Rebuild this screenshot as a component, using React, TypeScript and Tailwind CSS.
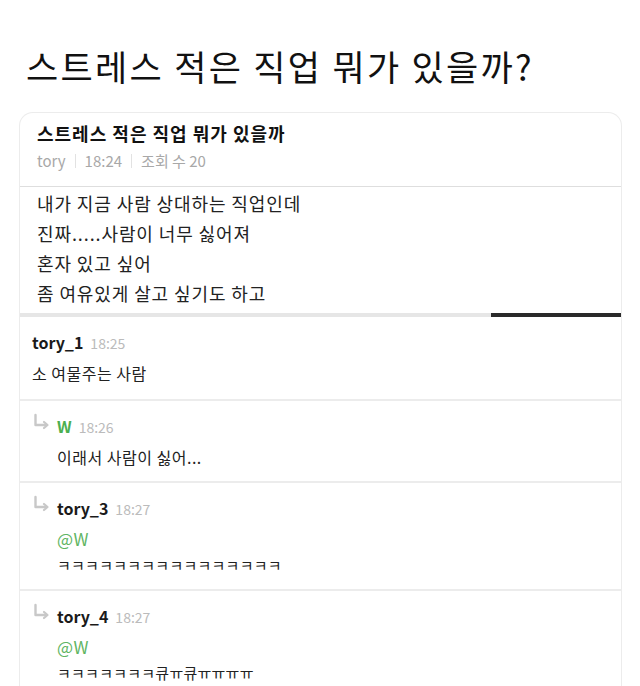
const font = { fontFamily: '"Noto Sans CJK KR", "Noto Sans", sans-serif' }

interface Comment {
  id: number
  name: string
  time: string
  reply: boolean
  mention?: string
  text: string
  nameGreen?: boolean
  laugh?: boolean
}

const comments: Comment[] = [
  { id: 1, name: 'tory_1', time: '18:25', reply: false, text: '소 여물주는 사람' },
  { id: 2, name: 'W', time: '18:26', reply: true, text: '이래서 사람이 싫어...', nameGreen: true },
  { id: 3, name: 'tory_3', time: '18:27', reply: true, mention: '@W', text: 'ㅋㅋㅋㅋㅋㅋㅋㅋㅋㅋㅋㅋㅋㅋㅋㅋ', laugh: true },
  { id: 4, name: 'tory_4', time: '18:27', reply: true, mention: '@W', text: 'ㅋㅋㅋㅋㅋㅋㅋ큐ㅠ큐ㅠㅠㅠㅠ', laugh: true },
]

export default function App() {
  return (
    <div className="h-[686px] w-[640px] overflow-hidden bg-white" style={font}>
      <h1 className="pl-[26px] pt-[41px] text-[35px] leading-[50px] tracking-[2.3px] font-normal text-[#111]">
        스트레스 적은 직업 뭐가 있을까?
      </h1>

      <div className="ml-[19px] mt-[21px] w-[603px] rounded-t-[14px] border border-b-0 border-[#ececec]">
        {/* Post header */}
        <div className="px-[17px] pt-[8px] pb-[15px] border-b border-[#dedede]">
          <p className="text-[18px] leading-[24px] tracking-[1px] font-bold text-[#111]">스트레스 적은 직업 뭐가 있을까</p>
          <div className="mt-[6px] flex items-center text-[15px] leading-[20px] text-[#a8a8a8]">
            <span>tory</span>
            <span className="mx-[9px] h-[14px] w-px bg-[#e2e2e2]" />
            <span>18:24</span>
            <span className="mx-[9px] h-[14px] w-px bg-[#e2e2e2]" />
            <span>조회 수 20</span>
          </div>
        </div>

        {/* Post body */}
        <div className="px-[17px] pt-px pb-[5px] text-[18px] leading-[30px] tracking-[0.9px] text-[#222]">
          <p>내가 지금 사람 상대하는 직업인데</p>
          <p>진짜.....사람이 너무 싫어져</p>
          <p>혼자 있고 싶어</p>
          <p>좀 여유있게 살고 싶기도 하고</p>
        </div>
        <div className="flex h-[4px]">
          <div className="flex-1 bg-[#e6e6e6]" />
          <div className="w-[130px] bg-[#2a2a2a]" />
        </div>

        {/* Comments */}
        {comments.map((c, i) => (
          <div
            key={c.id}
            className={`flex pt-[13px] ${i === 0 ? 'pb-[13px]' : 'pb-[11px] border-t-2 border-[#ececec]'} ${
              c.reply ? 'pl-[13px]' : 'pl-[12px]'
            }`}
          >
            {c.reply && <ReplyArrow />}
            <div>
              <div className="flex items-baseline gap-[7px] leading-[24px]">
                <span className={`text-[16px] font-bold ${c.nameGreen ? 'text-[#4caf50]' : 'text-[#1a1a1a]'}`}>
                  {c.name}
                </span>
                <span className="text-[14px] text-[#bbbbbb]">{c.time}</span>
              </div>
              <div className="mt-[5px] text-[16px] leading-[26px] tracking-[0.5px] text-[#222]">
                {c.mention && <p className="text-[17px] text-[#5fb563]">{c.mention}</p>}
                <p className={c.laugh ? 'text-[15px] tracking-[0.25px]' : ''}>{c.text}</p>
              </div>
            </div>
          </div>
        ))}
      </div>
    </div>
  )
}

function ReplyArrow() {
  return (
    <svg width="24" height="24" viewBox="0 0 24 24" className="-mt-[2px] shrink-0" fill="none">
      <path
        d="M2.5 3 V13 H13"
        stroke="#c8c8c8"
        strokeWidth="2.4"
        strokeLinecap="round"
        strokeLinejoin="round"
      />
      <path d="M11 10 L14.5 13 L11 16" stroke="#c8c8c8" strokeWidth="2.2" strokeLinecap="round" strokeLinejoin="round" />
    </svg>
  )
}
